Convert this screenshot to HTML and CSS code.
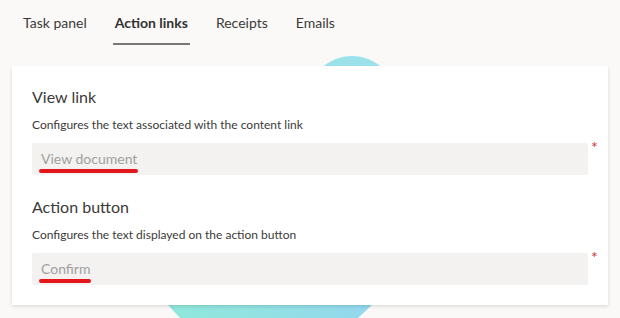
FILE: index.html
```html
<!DOCTYPE html>
<html lang="en">
<head>
  <meta charset="UTF-8">
  <meta name="viewport" content="width=device-width, initial-scale=1.0">
  <title>Action links</title>
  <link rel="stylesheet" href="styles.css">
</head>
<body>
  <!-- background decoration -->
  <div class="deco-circle"></div>
  <div class="deco-shape"></div>

  <nav class="tabs">
    <a href="#" class="tab">Task panel</a>
    <a href="#" class="tab active">Action links</a>
    <a href="#" class="tab">Receipts</a>
    <a href="#" class="tab">Emails</a>
  </nav>

  <div class="card">
    <div class="field-group">
      <h2>View link</h2>
      <p class="desc">Configures the text associated with the content link</p>
      <div class="row">
        <div class="input"><span class="mark">View document</span></div>
        <span class="required">*</span>
      </div>
    </div>

    <div class="field-group">
      <h2>Action button</h2>
      <p class="desc">Configures the text displayed on the action button</p>
      <div class="row">
        <div class="input"><span class="mark">Confirm</span></div>
        <span class="required">*</span>
      </div>
    </div>
  </div>
</body>
</html>
```

FILE: styles.css
```css
body {
  font-family: Lato, "Open Sans", Arial, sans-serif;
  margin: 0;
  padding: 0;
  height: 318px;
  overflow: hidden;
  position: relative;
  background-color: #faf9f8;
  color: #323130;
}
.deco-circle {
  position: absolute;
  left: 307px;
  top: 56px;
  width: 90px;
  height: 90px;
  border-radius: 50%;
  background: #9ce2ea;
}
.deco-shape {
  position: absolute;
  left: 140px;
  top: 290px;
  width: 260px;
  height: 28px;
  background: linear-gradient(90deg, #8eead9 0%, #93e2e2 45%, #93d4f1 100%);
  clip-path: polygon(14px 0, 248px 0, 218px 100%, 40px 100%);
}
.tabs {
  display: flex;
  gap: 28px;
  padding: 1px 0 0 23px;
  height: 44px;
}
.tab {
  position: relative;
  height: 44px;
  line-height: 44px;
  font-size: 14px;
  color: #3b3a39;
  text-decoration: none;
}
.tab.active {
  font-weight: 700;
  color: #323130;
}
.tab.active::after {
  content: "";
  position: absolute;
  left: -2px;
  right: -2px;
  bottom: 0;
  height: 2px;
  background: #797775;
}
.card {
  position: relative;
  z-index: 1;
  margin: 21px 12px 0;
  padding: 20px 12px 20px 20px;
  background: white;
  box-shadow: 0 1.6px 3.6px rgba(0, 0, 0, 0.132), 0 0.3px 0.9px rgba(0, 0, 0, 0.108);
}
.field-group + .field-group {
  margin-top: 21px;
}
h2 {
  margin: 0;
  font-size: 16px;
  font-weight: 400;
  line-height: 22px;
  color: #3b3a39;
}
.desc {
  margin: 9px 0 10px;
  font-size: 12px;
  line-height: 16px;
  color: #3b3a39;
}
.row {
  display: flex;
  align-items: flex-start;
}
.input {
  flex: 1;
  display: flex;
  align-items: center;
  height: 32px;
  padding: 0 9px;
  background: #f3f2f1;
  border-radius: 2px;
  font-size: 14px;
  color: #a19f9d;
}
.mark {
  position: relative;
  line-height: 20px;
}
.mark::after {
  content: "";
  position: absolute;
  left: -2px;
  right: -1px;
  top: 100%;
  height: 4px;
  border-radius: 2px;
  background: #e3161b;
}
.required {
  margin: 0 0 0 3px;
  width: 5px;
  font-size: 16px;
  line-height: 8px;
  color: #d13438;
}
```
